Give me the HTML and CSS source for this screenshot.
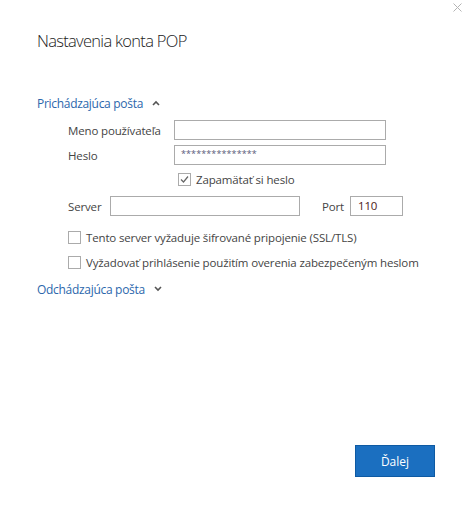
FILE: index.html
```html
<!DOCTYPE html>
<html lang="sk">
  <head>
    <meta charset="UTF-8" />
    <title>Nastavenia konta POP</title>
    <link rel="stylesheet" href="styles.css">
  </head>
  <body>
    <div class="dialog">
      <button class="close-btn" title="Zavrieť">
        <svg width="9" height="9" viewBox="0 0 9 9">
          <path d="M0.5 0.5 L8.5 8.5 M8.5 0.5 L0.5 8.5" stroke="#b4b4b4" stroke-width="1" fill="none" />
        </svg>
      </button>

      <h1 class="title">Nastavenia konta POP</h1>

      <div class="section-head">
        <span>Prichádzajúca pošta</span>
        <svg class="chevron" width="8" height="6" viewBox="0 0 8 6">
          <path d="M1 5 L4 2 L7 5" stroke="#555" stroke-width="1.6" fill="none" />
        </svg>
      </div>

      <div class="section-body">
        <div class="row">
          <label class="lbl lbl-wide">Meno používateľa</label>
          <input type="text" class="field field-wide" />
        </div>
        <div class="row">
          <label class="lbl lbl-wide">Heslo</label>
          <div class="field field-wide pass">***************</div>
        </div>
        <label class="check check-remember">
          <span class="box">
            <svg width="11" height="11" viewBox="0 0 11 11">
              <path d="M2 5.5 L4.5 8 L9 2.5" stroke="#666" stroke-width="1.2" fill="none" />
            </svg>
          </span>
          Zapamätať si heslo
        </label>
        <div class="row row-server">
          <label class="lbl lbl-server">Server</label>
          <input type="text" class="field field-server" />
          <label class="lbl lbl-port">Port</label>
          <div class="field field-port">110</div>
        </div>
        <label class="check check-ssl">
          <span class="box"></span>
          Tento server vyžaduje šifrované pripojenie (SSL/TLS)
        </label>
        <label class="check check-spa">
          <span class="box"></span>
          Vyžadovať prihlásenie použitím overenia zabezpečeným heslom
        </label>
      </div>

      <div class="section-head section-out">
        <span>Odchádzajúca pošta</span>
        <svg class="chevron" width="8" height="6" viewBox="0 0 8 6">
          <path d="M1 1 L4 4 L7 1" stroke="#555" stroke-width="1.6" fill="none" />
        </svg>
      </div>

      <div class="footer">
        <button class="next-btn">Ďalej</button>
      </div>
    </div>
  </body>
</html>
```

FILE: styles.css
```css
body {
  margin: 0;
  background: #fff;
  font-family: "Open Sans", "Noto Sans", sans-serif;
  font-size: 11.5px;
  letter-spacing: -0.15px;
  color: #444;
}

.dialog {
  position: relative;
  height: 514px;
  padding: 0 37px;
  box-sizing: border-box;
  display: flex;
  flex-direction: column;
}

.close-btn {
  position: absolute;
  top: 3px;
  left: 453px;
  padding: 0;
  border: none;
  background: none;
  line-height: 0;
}

.title {
  margin: 29px 0 0;
  font-size: 16.5px;
  font-weight: 300;
  line-height: 24px;
  letter-spacing: -0.7px;
  color: #222;
}

.section-head {
  display: flex;
  align-items: center;
  height: 18px;
  margin-top: 41px;
  font-size: 12px;
  letter-spacing: -0.3px;
  color: #2c67ac;
  white-space: nowrap;
}

.section-head .chevron {
  margin-left: 9px;
}

.section-out {
  margin-top: 10px;
}

.section-body {
  padding-left: 31px;
  display: flex;
  flex-direction: column;
}

.row {
  display: flex;
  align-items: center;
  height: 20px;
  margin-top: 5px;
  white-space: nowrap;
}

.row:first-child {
  margin-top: 8px;
}

.lbl-wide {
  width: 106px;
}

.lbl-server {
  width: 42px;
}

.lbl-port {
  margin-left: 22px;
  width: 28px;
}

.field {
  flex-shrink: 0;
  height: 20px;
  box-sizing: border-box;
  border: 1px solid #ababab;
  background: #fff;
  margin: 0;
  padding: 0 6px;
  font-family: inherit;
  font-size: 11.5px;
}

.field-wide {
  width: 212px;
}

.field-server {
  width: 190px;
}

.field-port {
  width: 53px;
  line-height: 18px;
  color: #4c2020;
  padding-left: 7px;
}

.pass {
  font-size: 9px;
  line-height: 16px;
  color: #5a5a7a;
  letter-spacing: 0.1px;
}

.row-server {
  margin-top: 9px;
}

.check {
  display: flex;
  align-items: center;
  height: 16px;
  white-space: nowrap;
}

.check .box {
  flex-shrink: 0;
  width: 13px;
  height: 13px;
  box-sizing: border-box;
  border: 1px solid #ababab;
  background: #fff;
  margin-right: 5px;
  display: flex;
  align-items: center;
  justify-content: center;
}

.check-remember {
  margin-top: 6px;
  padding-left: 110px;
}

.check-ssl {
  margin-top: 13px;
}

.check-spa {
  margin-top: 9px;
}

.footer {
  display: flex;
  justify-content: flex-end;
  margin-top: auto;
  margin-bottom: 37px;
}

.next-btn {
  width: 80px;
  height: 32px;
  background: #1b6fc0;
  border: 1px solid #0e5aa3;
  color: #fff;
  font-family: inherit;
  font-size: 12px;
  padding: 0;
}
```
